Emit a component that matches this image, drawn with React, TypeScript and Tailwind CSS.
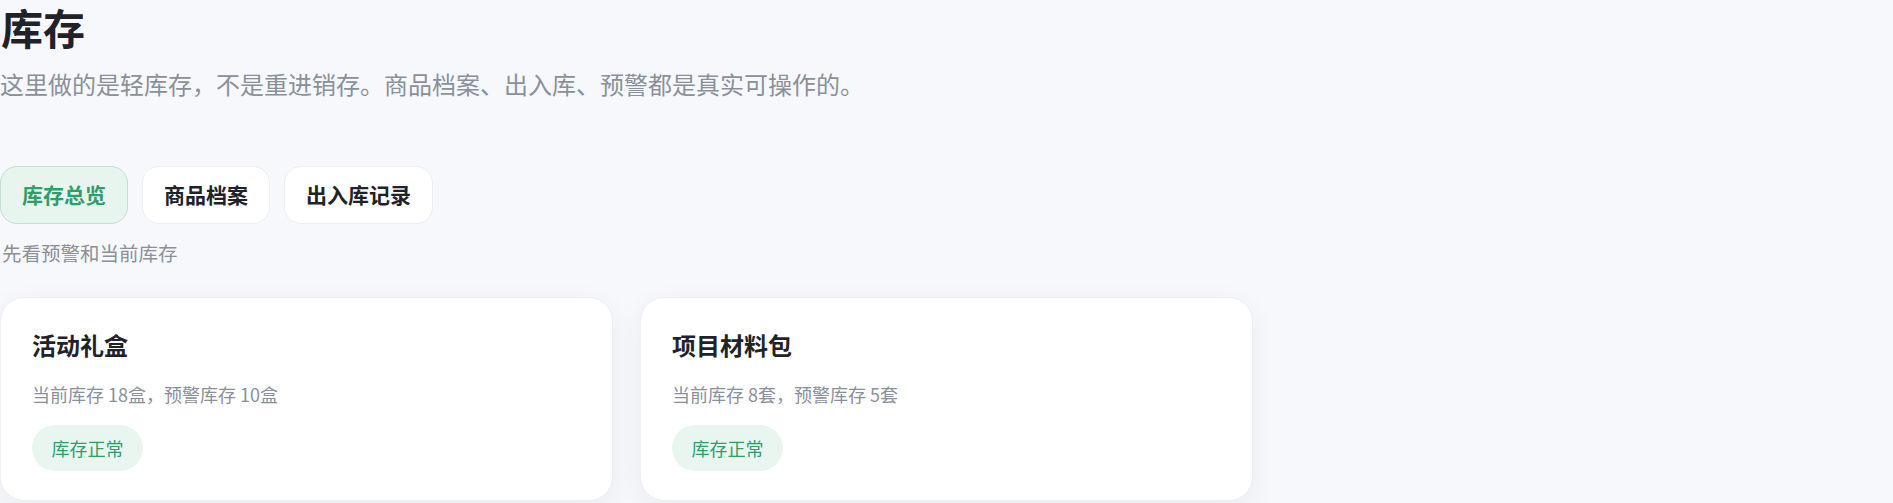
import { useState } from "react";

const TABS = [
  { value: "overview", label: "库存总览" },
  { value: "products", label: "商品档案" },
  { value: "records", label: "出入库记录" },
];

const ITEMS = [
  { name: "活动礼盒", stock: "18盒", warn: "10盒", status: "库存正常" },
  { name: "项目材料包", stock: "8套", warn: "5套", status: "库存正常" },
];

export default function App() {
  const [tab, setTab] = useState("overview");

  return (
    <div className="min-h-screen bg-[#f7f8fb] font-['Noto_Sans_CJK_SC','Noto_Sans',sans-serif] text-[#1f2329]">
      {/* Header */}
      <h1 className="pl-[1px] text-[42px] leading-[54px] font-bold text-[#1f2329]">库存</h1>
      <p className="mt-[12px] text-[24px] leading-[36px] text-[#8a9099]">
        这里做的是轻库存，不是重进销存。商品档案、出入库、预警都是真实可操作的。
      </p>

      {/* Tabs */}
      <div className="mt-[64px] flex gap-[14px]">
        {TABS.map((t) => (
          <button
            key={t.value}
            onClick={() => setTab(t.value)}
            className={`h-[58px] px-[21px] rounded-[17px] border text-[21px] font-bold cursor-pointer ${
              tab === t.value
                ? "bg-[#e8f5ef] border-[#bfe1d1] text-[#2e9e6b]"
                : "bg-white border-[#eceef2] text-[#1f2329]"
            }`}
          >
            {t.label}
          </button>
        ))}
      </div>
      <p className="mt-[15px] pl-[2px] text-[19.5px] leading-[28px] text-[#8a9099]">先看预警和当前库存</p>

      {/* Cards */}
      <div className="mt-[30px] grid grid-cols-3 gap-[27px]">
        {ITEMS.map((item) => (
          <div
            key={item.name}
            className="rounded-[24px] border border-[#eceef2] bg-white px-[31px] pt-[30px] pb-[29px] shadow-[0_8px_28px_rgba(20,30,60,0.06)]"
          >
            <h3 className="text-[24px] leading-[34px] font-bold text-[#1f2329]">{item.name}</h3>
            <p className="mt-[19px] text-[18px] leading-[27px] text-[#8a9099]">
              当前库存 {item.stock}，预警库存 {item.warn}
            </p>
            <span className="mt-[17px] inline-flex h-[46px] items-center rounded-full bg-[#e9f6ef] px-[19.5px] text-[18px] text-[#2e9e6b]">
              {item.status}
            </span>
          </div>
        ))}
      </div>
    </div>
  );
}
